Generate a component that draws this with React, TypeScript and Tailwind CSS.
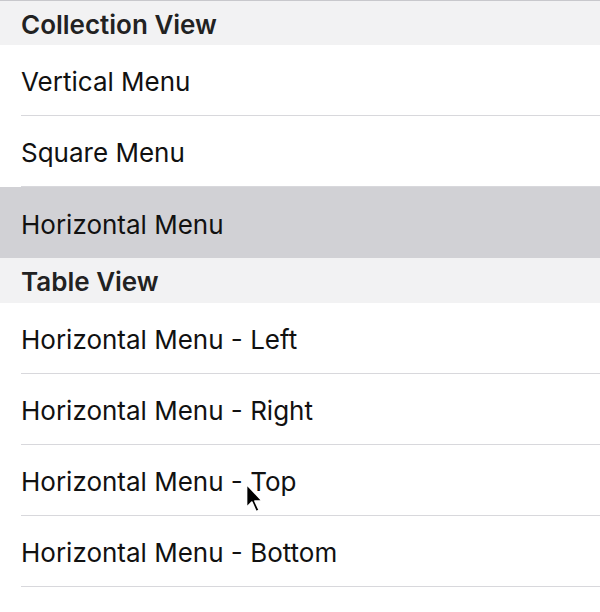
import React from "react";

interface Section {
  title: string;
  items: { label: string; selected?: boolean }[];
}

const sections: Section[] = [
  {
    title: "Collection View",
    items: [{ label: "Vertical Menu" }, { label: "Square Menu" }, { label: "Horizontal Menu", selected: true }],
  },
  {
    title: "Table View",
    items: [
      { label: "Horizontal Menu - Left" },
      { label: "Horizontal Menu - Right" },
      { label: "Horizontal Menu - Top" },
      { label: "Horizontal Menu - Bottom" },
    ],
  },
];

const Cursor: React.FC = () => (
  <svg className="absolute left-[244px] top-[481px]" width="22" height="34" viewBox="0 0 20 32">
    <path d="M2 2 L2 24 L7 19 L11 28 L14 26.5 L10 18 L17 18 Z" fill="#000" stroke="#fff" strokeWidth="1.6" strokeLinejoin="round" />
  </svg>
);

export default function App() {
  return (
    <div className="relative min-h-screen w-[600px] bg-white border-t border-[#c8c8cc] text-[#111]" style={{ fontFamily: "Inter, 'Liberation Sans', sans-serif" }}>
      {sections.map((section, i) => (
        <div key={section.title}>
          <div className={(i === 0 ? "h-[44px]" : "h-[45px]") + " bg-[#f2f2f3] flex items-center pl-[21px] pt-[2px] text-[26px] font-semibold text-[#222]"}>
            {section.title}
          </div>
          {section.items.map((item) => (
            <div key={item.label} className={item.selected ? "h-[71px] bg-[#d1d1d5]" : "h-[71px] bg-white"}>
              <div className={item.selected ? "h-[71px] ml-[21px] pt-[3px] flex items-center text-[26px]" : "h-[71px] ml-[21px] pt-[3px] flex items-center text-[26px] border-b border-[#d8d8dc]"}>
                {item.label}
              </div>
            </div>
          ))}
        </div>
      ))}
      <Cursor />
    </div>
  );
}
